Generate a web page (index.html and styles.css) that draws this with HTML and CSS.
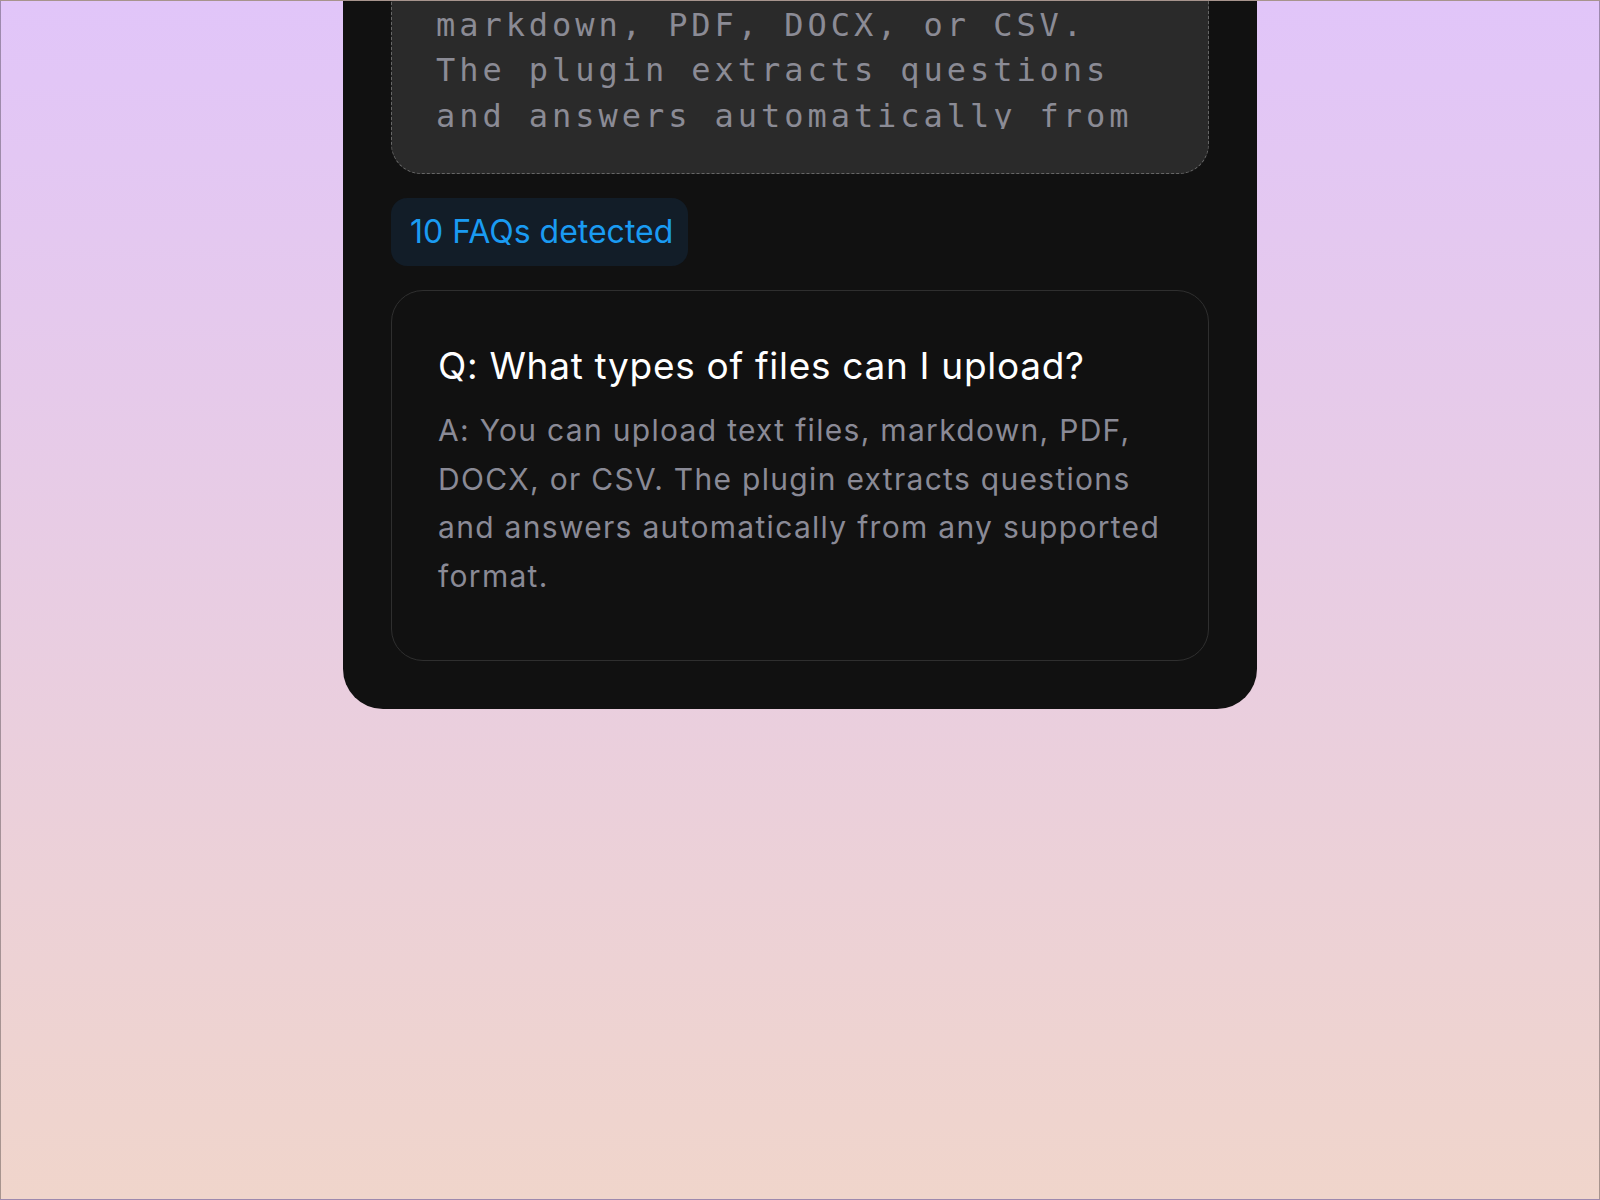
FILE: index.html
```html
<!DOCTYPE html>
<html lang="en">
<head>
<meta charset="utf-8">
<title>FAQ Extractor</title>
<link rel="stylesheet" href="styles.css">
</head>
<body>
<div class="frame">
  <section class="card">
    <div class="input">
      <div class="input-view">You can upload text files, markdown, PDF, DOCX, or CSV. The plugin extracts questions and answers automatically from any supported format.</div>
    </div>
    <div class="badge">10 FAQs detected</div>
    <article class="faq">
      <h2 class="faq-q">Q: What types of files can I upload?</h2>
      <p class="faq-a">A: You can upload text files, markdown, PDF, DOCX, or CSV. The plugin extracts questions and answers automatically from any supported format.</p>
    </article>
  </section>
</div>
</body>
</html>
```

FILE: styles.css
```css
html, body {
  margin: 0;
  padding: 0;
}

body {
  font-family: "Inter", "Noto Sans", sans-serif;
}

.frame {
  width: 1600px;
  height: 1200px;
  box-sizing: border-box;
  border: 1px solid rgba(0, 0, 0, 0.3);
  background: linear-gradient(to bottom, #e1c5f9, #f0d5cb);
  overflow: hidden;
  display: flex;
  flex-direction: column;
  align-items: center;
}

.card {
  width: 914px;
  box-sizing: border-box;
  margin-top: -137px;
  padding: 48px;
  background: #111111;
  border-radius: 40px;
  display: flex;
  flex-direction: column;
  gap: 24px;
}

.input {
  background: #2a2a2a;
  border: 1px dashed #666666;
  border-radius: 30px;
  padding: 44px;
}

.input-view {
  height: 172px;
  overflow: hidden;
  font-family: "DejaVu Sans Mono", "Liberation Mono", monospace;
  font-size: 32px;
  line-height: 45.6px;
  letter-spacing: 3.95px;
  color: #8b8b95;
}

.badge {
  align-self: flex-start;
  padding: 16px 15px 16px 19px;
  background: #121d28;
  border-radius: 16px;
  color: #1a9bf2;
  font-size: 32px;
  line-height: 36px;
}

.faq {
  border: 1px solid #2f2f2f;
  border-radius: 32px;
  padding: 50px 30px 59px 46px;
}

.faq-q {
  margin: 0 0 15px;
  font-size: 37px;
  line-height: 50px;
  font-weight: 400;
  letter-spacing: 0.7px;
  color: #ffffff;
}

.faq-a {
  margin: 0;
  max-width: 726px;
  font-size: 30px;
  line-height: 48.7px;
  letter-spacing: 1.3px;
  color: #8a8a96;
}
```
